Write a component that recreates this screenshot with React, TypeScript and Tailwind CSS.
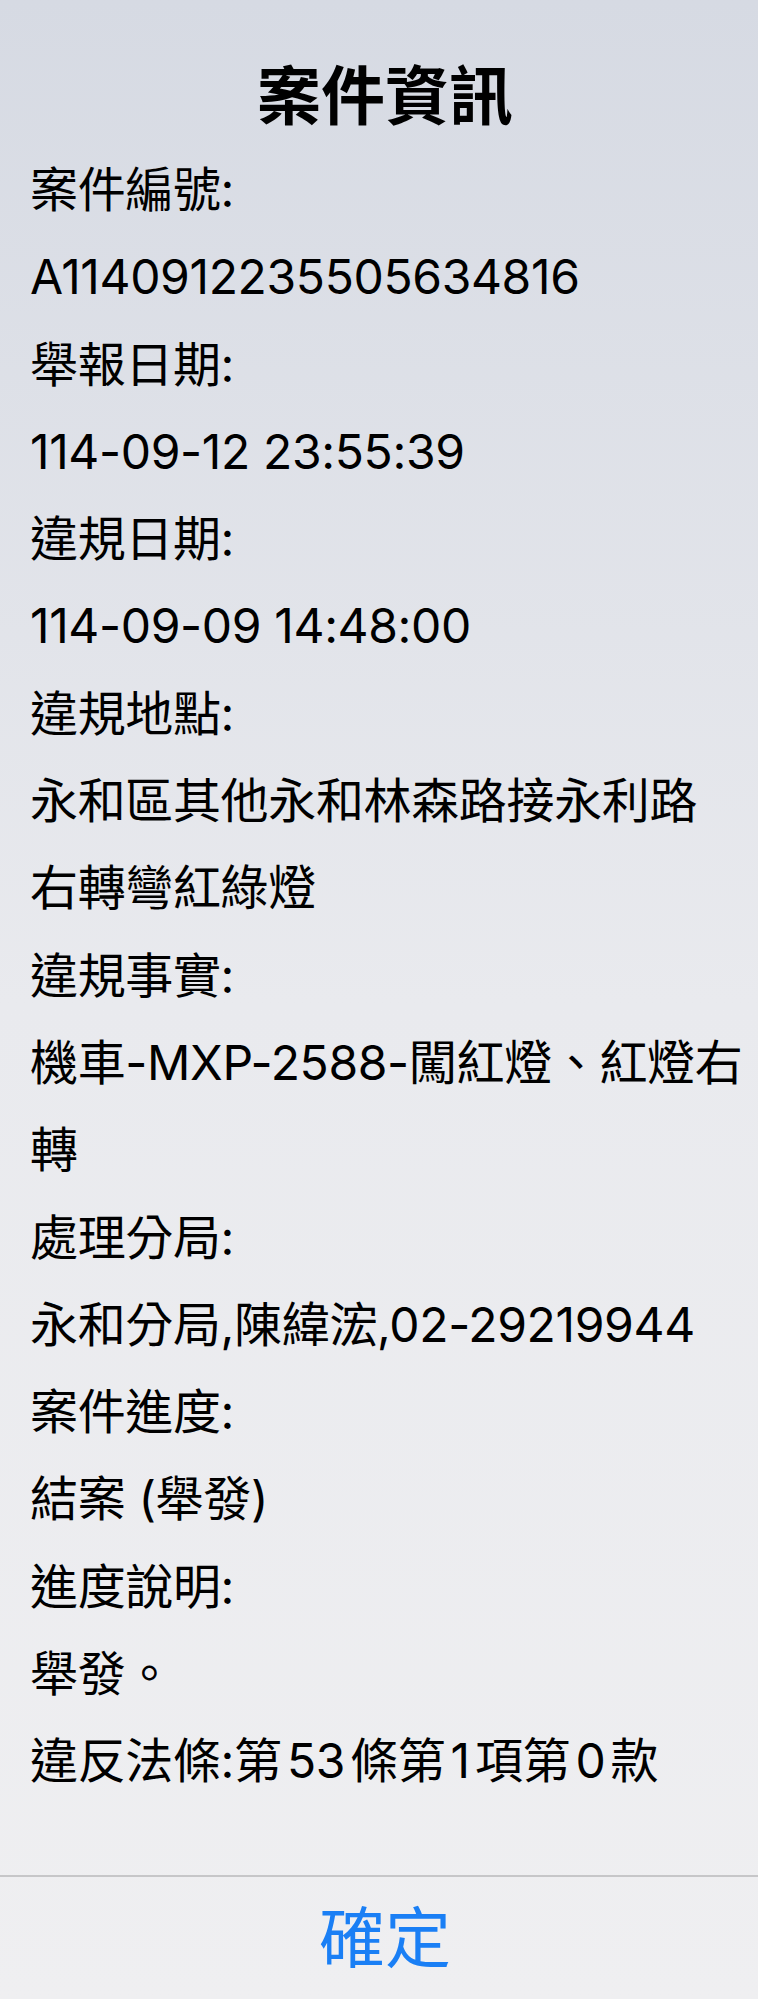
const LINES = [
  "案件編號:",
  "A1140912235505634816",
  "舉報日期:",
  "114-09-12 23:55:39",
  "違規日期:",
  "114-09-09 14:48:00",
  "違規地點:",
  "永和區其他永和林森路接永利路",
  "右轉彎紅綠燈",
  "違規事實:",
  "機車-MXP-2588-闖紅燈、紅燈右",
  "轉",
  "處理分局:",
  "永和分局,陳緯浤,02-29219944",
  "案件進度:",
  "結案 (舉發)",
  "進度說明:",
  "舉發。",
];

export default function App() {
  return (
    <div
      className="flex h-[1999px] w-[758px] flex-col overflow-hidden bg-gradient-to-b from-[#d6dae3] via-[#e9eaee] to-[#efeff1] text-black"
      style={{ fontFamily: 'Inter, "Noto Sans CJK TC", sans-serif' }}
    >
      <div className="flex-1">
        <h1 className="pl-[12px] pt-[56px] text-center text-[64px] font-bold leading-[80px]">案件資訊</h1>
        <div className="mt-[10px] px-[30px] tracking-[-0.35px]">
          {LINES.map((line, i) => (
            <p key={i} className="whitespace-nowrap text-[48px] leading-[87.3px]">
              {line}
            </p>
          ))}
          <p className="whitespace-nowrap text-[48px] leading-[87.3px] [word-spacing:-8px]">違反法條:第 53 條第 1 項第 0 款</p>
        </div>
      </div>
      <div className="h-[2px] bg-[#c6c6c8]" />
      <button className="h-[122px] w-full pl-[12px] text-center text-[66px] leading-[122px] text-[#1a7ff5]">確定</button>
    </div>
  );
}
